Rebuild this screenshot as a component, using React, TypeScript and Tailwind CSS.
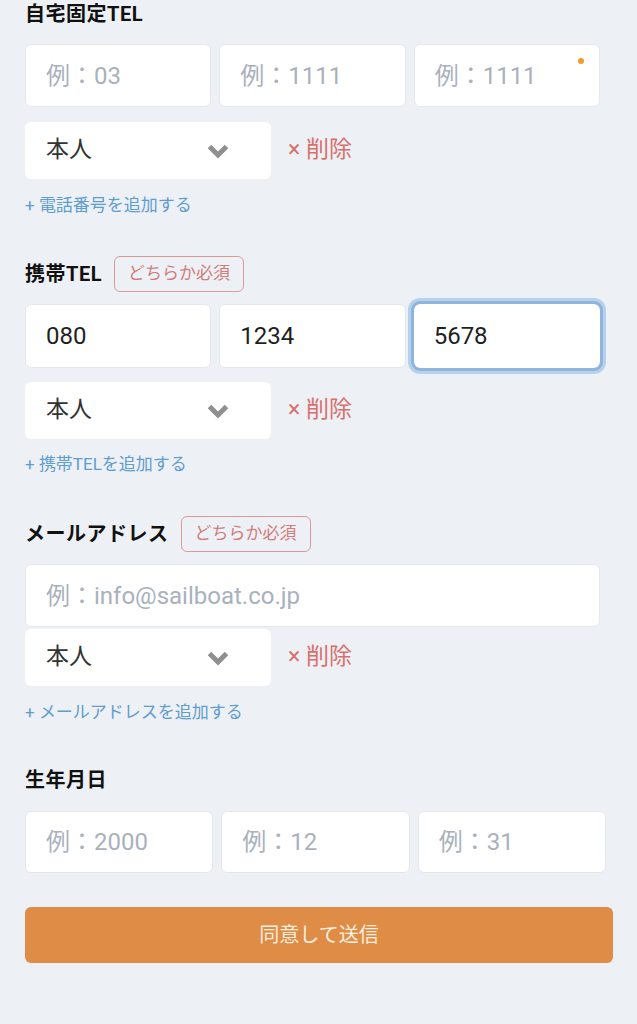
const font = { fontFamily: '"Roboto", "Noto Sans CJK JP", sans-serif' };

const Chevron = () => (
  <svg width="24" height="16" viewBox="0 0 24 16" fill="none">
    <path d="M3.5 3.5 L12 12 L20.5 3.5" stroke="#8f8f8f" strokeWidth="5" strokeLinejoin="miter" />
  </svg>
);

const Badge = () => (
  <span className="ml-[12px] inline-flex h-[36px] items-center rounded-[6px] border border-[#dc9a97] px-[13px] text-[17px] font-normal tracking-normal text-[#d07e7a]">
    どちらか必須
  </span>
);

const Field = ({ placeholder, value, focused, dot }: { placeholder?: string; value?: string; focused?: boolean; dot?: boolean }) => (
  <div
    className={
      "relative flex h-full items-center rounded-[6px] bg-white pl-[20px] " +
      (focused
        ? "outline-[3px] outline-[#8fb4dd] shadow-[0_0_0_6px_#b6d1ee]"
        : "border border-[#e4e8ee]")
    }
  >
    <input
      readOnly
      defaultValue={value}
      placeholder={placeholder}
      className="w-full bg-transparent text-[24px] text-[#1f1f1f] outline-none placeholder:text-[#a9b1bd]"
      style={font}
    />
    {dot && <span className="absolute right-[15px] top-[13px] h-[6px] w-[6px] rounded-full bg-[#ef9d2d]" />}
  </div>
);

const SelectRow = ({ mt }: { mt: string }) => (
  <div className={"flex items-center " + mt}>
    <div className="flex h-[57px] w-[246px] items-center justify-between rounded-[6px] bg-white pl-[21px] pr-[41px] text-[23px] text-[#333]">
      <span>本人</span>
      <Chevron />
    </div>
    <span className="ml-[17px] text-[23px] text-[#d6706c]">× 削除</span>
  </div>
);

const AddLink = ({ text, mt }: { text: string; mt: string }) => (
  <div className={"flex h-[20px] items-center text-[17px] text-[#5f9dd0] " + mt}>+ {text}</div>
);

export default function App() {
  return (
    <div className="min-h-screen w-[637px] bg-[#edf0f5] pl-[25px]" style={font}>
      {/* 自宅固定TEL */}
      <div className="flex h-[28px] items-center text-[20px] font-bold tracking-[0.5px] text-[#111]">自宅固定TEL</div>
      <div className="mt-[16px] grid h-[63px] w-[575px] grid-cols-3 gap-[8px]">
        <Field placeholder="例：03" />
        <Field placeholder="例：1111" />
        <Field placeholder="例：1111" dot />
      </div>
      <SelectRow mt="mt-[15px]" />
      <AddLink text="電話番号を追加する" mt="mt-[17px]" />

      {/* 携帯TEL */}
      <div className="mt-[40px] flex h-[36px] items-center text-[20px] font-bold tracking-[0.5px] text-[#111]">
        携帯TEL
        <Badge />
      </div>
      <div className="mt-[12px] grid h-[64px] w-[575px] grid-cols-3 gap-[8px]">
        <Field value="080" />
        <Field value="1234" />
        <Field value="5678" focused />
      </div>
      <SelectRow mt="mt-[14px]" />
      <AddLink text="携帯TELを追加する" mt="mt-[16px]" />

      {/* メールアドレス */}
      <div className="mt-[41px] flex h-[36px] items-center text-[20px] font-bold tracking-[0.5px] text-[#111]">
        メールアドレス
        <Badge />
      </div>
      <div className="mt-[12px] h-[63px] w-[575px]">
        <Field placeholder="例：info@sailboat.co.jp" />
      </div>
      <SelectRow mt="mt-[2px]" />
      <AddLink text="メールアドレスを追加する" mt="mt-[17px]" />

      {/* 生年月日 */}
      <div className="mt-[43px] flex h-[28px] items-center text-[20px] font-bold tracking-[0.5px] text-[#111]">生年月日</div>
      <div className="mt-[17px] grid h-[62px] w-[581px] grid-cols-3 gap-[8px]">
        <Field placeholder="例：2000" />
        <Field placeholder="例：12" />
        <Field placeholder="例：31" />
      </div>

      <button className="mt-[34px] flex h-[56px] w-[588px] items-center justify-center rounded-[6px] bg-[#df8c47] text-[20px] text-[#fcefdf]">
        同意して送信
      </button>
    </div>
  );
}
